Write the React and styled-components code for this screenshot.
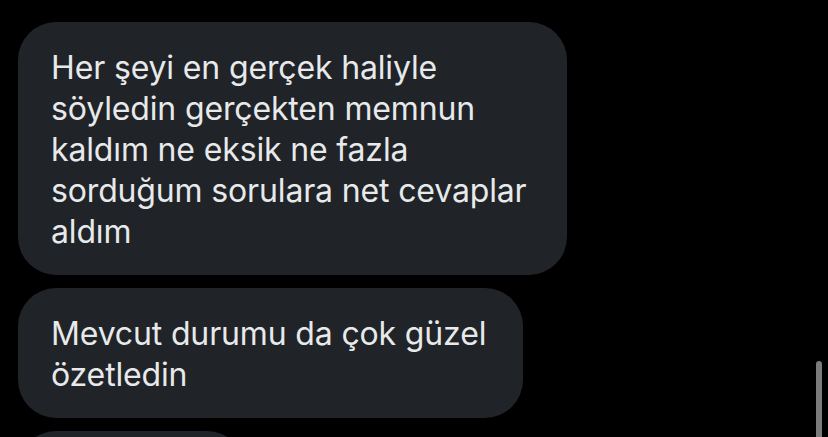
import React from 'react';
import styled, { createGlobalStyle } from 'styled-components';

const GlobalStyle = createGlobalStyle`
  html, body {
    margin: 0;
    padding: 0;
    background: #000000;
    overflow: hidden;
  }
  body {
    font-family: Inter, "Noto Sans", "Liberation Sans", sans-serif;
  }
`;

const Screen = styled.div`
  position: relative;
  width: 828px;
  height: 437px;
  overflow: hidden;
  background: #000000;
`;

const Thread = styled.div`
  display: flex;
  flex-direction: column;
  align-items: flex-start;
  gap: 13px;
  padding: 22px 0 0 18px;
`;

const Bubble = styled.div`
  box-sizing: border-box;
  width: ${(p) => p.$width}px;
  min-height: ${(p) => p.$minHeight || 0}px;
  padding: 25px 30px 23px 33px;
  border-radius: 38px;
  background: #202327;
  color: #e7e9ea;
  font-size: 32px;
  line-height: 41px;
  letter-spacing: -0.15px;
  white-space: pre-line;
`;

const ScrollThumb = styled.div`
  position: absolute;
  right: 6px;
  top: 361px;
  width: 6px;
  height: 120px;
  border-radius: 3px;
  background: #7b7b7b;
`;

const messages = [
  {
    id: 1,
    width: 549,
    text: 'Her şeyi en gerçek haliyle\nsöyledin gerçekten memnun\nkaldım ne eksik ne fazla\nsorduğum sorulara net cevaplar\naldım',
  },
  {
    id: 2,
    width: 505,
    text: 'Mevcut durumu da çok güzel\nözetledin',
  },
  {
    id: 3,
    width: 227,
    text: '',
    minHeight: 90,
  },
];

export default function App() {
  return (
    <Screen>
      <GlobalStyle />
      <Thread>
        {messages.map((m) => (
          <Bubble key={m.id} $width={m.width} $minHeight={m.minHeight}>
            {m.text}
          </Bubble>
        ))}
      </Thread>
      <ScrollThumb />
    </Screen>
  );
}
